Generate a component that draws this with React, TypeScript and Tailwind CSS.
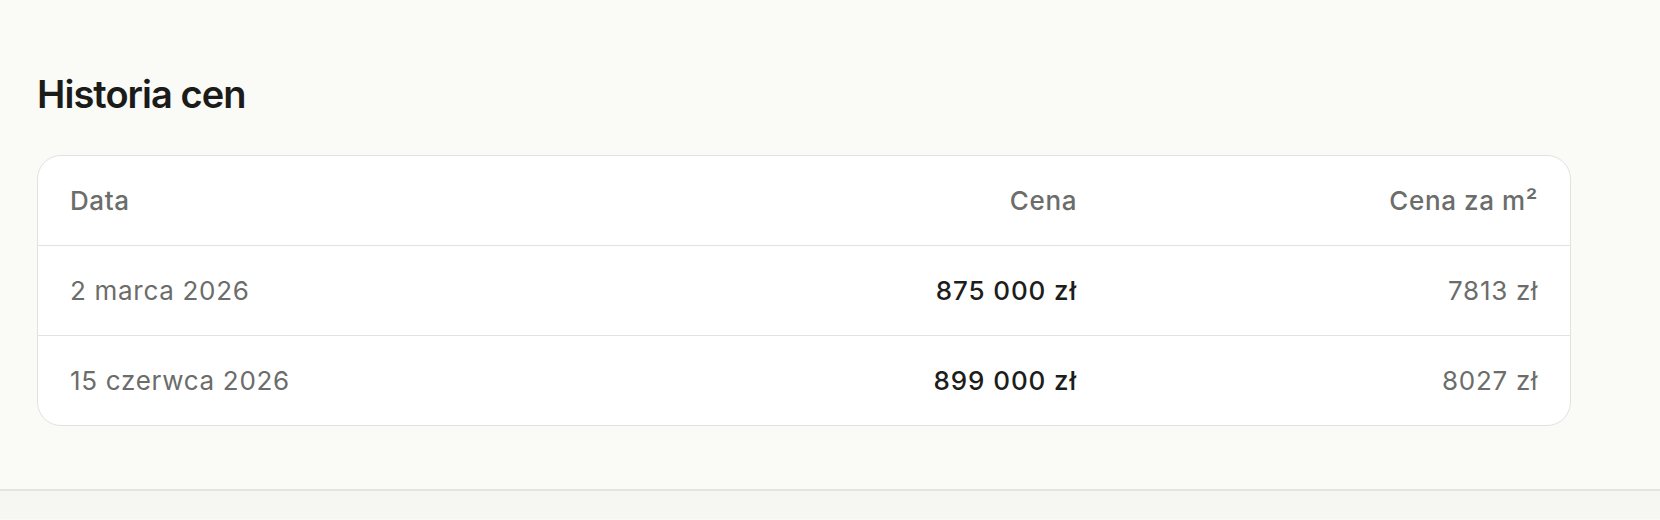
import React from 'react';

const rows = [
  { date: '2 marca 2026', price: '875 000 zł', perM: '7813 zł' },
  { date: '15 czerwca 2026', price: '899 000 zł', perM: '8027 zł' },
];

export default function App() {
  return (
    <div className="min-h-[520px] bg-[#fafaf7] font-['Inter','Noto_Sans',sans-serif]">
      <section className="pl-[37px] pt-[75px] pb-[63px]">
        <h2 className="text-[38px] leading-[38px] font-semibold tracking-tight text-[#1b1b19]">
          Historia cen
        </h2>

        <div className="mt-[42px] w-[1534px] overflow-hidden rounded-3xl border border-[#e2e2df] bg-white">
          <div className="grid h-[90px] grid-cols-[1fr_461px_461px] items-center border-b border-[#e2e2df] text-[26px] font-medium tracking-[0.6px] text-[#6b6d6a]">
            <div className="px-8">Data</div>
            <div className="px-8 text-right">Cena</div>
            <div className="px-8 text-right">Cena za m²</div>
          </div>
          {rows.map((row, i) => (
            <div
              key={row.date}
              className={
                'grid grid-cols-[1fr_461px_461px] items-center text-[26px] tracking-[0.7px] ' +
                (i < rows.length - 1 ? 'h-[90px] border-b border-[#e2e2df]' : 'h-[89px]')
              }
            >
              <div className="px-8 text-[#6b6d6a]">{row.date}</div>
              <div className="px-8 text-right font-medium tracking-[0.9px] text-[#1d1d1b]">{row.price}</div>
              <div className="px-8 text-right text-[#6b6d6a]">{row.perM}</div>
            </div>
          ))}
        </div>
      </section>
      <div className="h-[30px] border-t-2 border-[#e4e4e0] bg-[#f6f6f2]" />
    </div>
  );
}
